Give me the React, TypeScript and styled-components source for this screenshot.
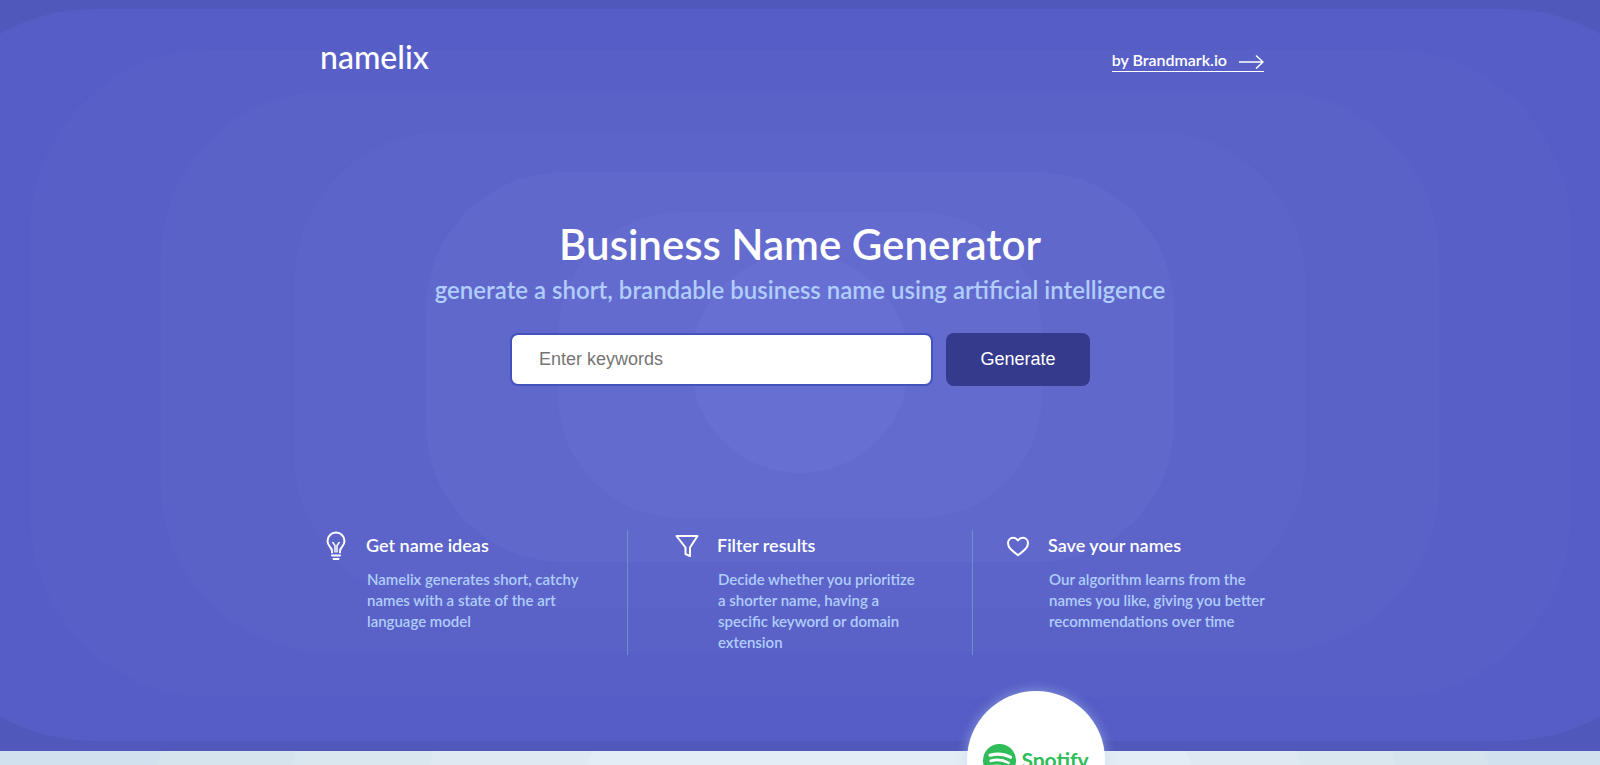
import React from "react";
import styled, { createGlobalStyle } from "styled-components";

const GlobalStyle = createGlobalStyle`
  *, *::before, *::after { box-sizing: border-box; }
  body { margin: 0; }
  h1, h2, p { margin: 0; font-weight: 600; }
`;

const Page = styled.div`
  display: flex;
  flex-direction: column;
  height: 100vh;
  overflow: hidden;
  font-family: Lato, "Open Sans", sans-serif;
  font-weight: 600;
  color: #ffffff;
`;

const Hero = styled.section`
  position: relative;
  flex: none;
  padding: 40px 24px 96px;
  background: #5059bb;
`;

const Backdrop = styled.svg`
  position: absolute;
  inset: 0;
  width: 100%;
  height: 100%;
`;

const Container = styled.div`
  position: relative;
  max-width: 960px;
  margin: 0 auto;
`;

const Header = styled.header`
  display: flex;
  justify-content: space-between;
  align-items: center;
  height: 40px;
  padding-right: 16px;
`;

const Logo = styled.a`
  padding-bottom: 6px;
  color: inherit;
  font-size: 32px;
  font-weight: 500;
  line-height: 32px;
  text-decoration: none;
`;

const MakerLink = styled.a`
  display: flex;
  align-items: center;
  gap: 12px;
  height: 24px;
  border-bottom: 1px solid #ffffff;
  color: inherit;
  font-size: 16px;
  line-height: 24px;
  text-decoration: none;
`;

const Intro = styled.div`
  display: flex;
  flex-direction: column;
  align-items: center;
  padding-top: 140px;
  text-align: center;
`;

const Title = styled.h1`
  font-size: 42px;
  line-height: 48px;
`;

const Subtitle = styled.p`
  padding-top: 6px;
  color: #b0cdfb;
  font-size: 24px;
  line-height: 32px;
  white-space: nowrap;
`;

const SearchForm = styled.form`
  display: flex;
  gap: 13px;
  width: 580px;
  padding-top: 27px;
`;

const KeywordInput = styled.input`
  flex: 1;
  min-width: 0;
  height: 53px;
  padding: 0 27px;
  border: 2px solid #4253bd;
  border-radius: 8px;
  background: #ffffff;
  color: #333333;
  font: 18px "Liberation Sans", Arial, sans-serif;
  outline: none;

  &::placeholder { color: #757575; opacity: 1; }
`;

const GenerateButton = styled.button`
  width: 144px;
  height: 53px;
  border: 0;
  border-radius: 8px;
  background: #353a8d;
  color: #ffffff;
  font: 18px "Liberation Sans", Arial, sans-serif;
  cursor: pointer;
`;

const Features = styled.div`
  display: grid;
  grid-template-columns: 308px 345px 1fr;
  padding-top: 144px;
`;

const Feature = styled.article<{ $inset: number; $divided: boolean }>`
  display: grid;
  grid-template-columns: 32px 1fr;
  grid-template-rows: 32px auto;
  column-gap: 14px;
  align-content: start;
  height: 125px;
  padding-left: ${(p) => p.$inset}px;
  border-right: ${(p) => (p.$divided ? "1px solid #6d93cb" : "0")};
`;

const FeatureIcon = styled.svg`
  width: 32px;
  height: 32px;
  fill: none;
  stroke: #ffffff;
  stroke-width: 2;
  stroke-linecap: round;
  stroke-linejoin: round;
`;

const FeatureTitle = styled.h2`
  font-size: 18px;
  line-height: 30px;
  white-space: nowrap;
`;

const FeatureText = styled.p`
  grid-column: 2;
  padding: 7px 0 0 1px;
  color: #b0cdfb;
  font-size: 15px;
  line-height: 21px;
  white-space: pre;
`;

const Clients = styled.section`
  position: relative;
  flex: 1;
  background: #d1e1ed;
`;

const Badge = styled.div`
  position: absolute;
  top: -60px;
  left: calc(50% + 167px);
  display: flex;
  align-items: center;
  justify-content: center;
  gap: 5px;
  width: 138px;
  height: 138px;
  border-radius: 50%;
  background: #ffffff;
  box-shadow: 0 0 12px rgba(190, 214, 236, 0.5);
  color: #2ebd59;
  font-size: 21px;
  font-weight: 700;
  line-height: 24px;
`;

const rings = [
  { x: -102, y: 9, right: 1702, bottom: 741, r: 197, color: "#565dc7" },
  { x: 30, y: 50, right: 1571, bottom: 697, r: 182, color: "#5860c8" },
  { x: 161, y: 91, right: 1439, bottom: 652, r: 167, color: "#5a62c8" },
  { x: 294, y: 131, right: 1306, bottom: 607, r: 152, color: "#5c64c9" },
  { x: 426, y: 172, right: 1174, bottom: 562, r: 137, color: "#6068cb" },
  { x: 558, y: 212, right: 1042, bottom: 518, r: 122, color: "#636bce" },
  { x: 691, y: 254, right: 909, bottom: 473, r: 109, color: "#6770d2" },
];

const bands = [
  { left: 160, right: 1485, color: "#d6e4ed" },
  { left: 295, right: 1393, color: "#dae7ee" },
  { left: 432, right: 1298, color: "#dee9f1" },
  { left: 590, right: 1188, color: "#e3edf5" },
];

const features = [
  {
    title: "Get name ideas",
    text: "Namelix generates short, catchy\nnames with a state of the art\nlanguage model",
    inset: 0,
    icon: (
      <>
        <path d="M12 22.500v-1.500c0-3.500-4.500-5-4.500-10a8.500 8.500 0 0 1 17 0c0 5-4.500 6.500-4.500 10v1.500" />
        <path d="M15 22v-6.500l-2.200-3M17 22v-6.500l2.200-3" strokeWidth="1.500" />
        <path d="M12 25.500h8M13.500 29h5" />
      </>
    ),
  },
  {
    title: "Filter results",
    text: "Decide whether you prioritize\na shorter name, having a\nspecific keyword or domain\nextension",
    inset: 43,
    icon: <path d="M5.500 6h21l-7.500 11.500v8.500l-4.500-2v-6.500z" />,
  },
  {
    title: "Save your names",
    text: "Our algorithm learns from the\nnames you like, giving you better\nrecommendations over time",
    inset: 29,
    icon: (
      <path d="M16 10.500C14.700 8.700 12.900 7.800 11.200 7.800C8.200 7.800 6 10.200 6 13.300C6 15.800 7.200 17.700 8.800 19.200C11 21.300 13.500 23.300 16 25.200C18.500 23.300 21 21.300 23.200 19.200C24.800 17.700 26 15.800 26 13.300C26 10.200 23.800 7.800 20.800 7.800C19.100 7.800 17.300 8.700 16 10.500Z" />
    ),
  },
];

function RingBackdrop() {
  return (
    <Backdrop viewBox="0 0 1600 751" preserveAspectRatio="xMidYMid slice" aria-hidden="true">
      {rings.map((ring) => (
        <rect
          key={ring.x}
          x={ring.x}
          y={ring.y}
          width={ring.right - ring.x}
          height={ring.bottom - ring.y}
          rx={ring.r}
          fill={ring.color}
        />
      ))}
    </Backdrop>
  );
}

function BandBackdrop() {
  return (
    <Backdrop viewBox="0 0 1600 14" preserveAspectRatio="none" aria-hidden="true">
      {bands.map((band) => (
        <polygon
          key={band.left}
          fill={band.color}
          points={`${band.left + 2},0 ${band.right - 2},0 ${band.right + 3},14 ${band.left - 3},14`}
        />
      ))}
    </Backdrop>
  );
}

function SpotifyMark() {
  return (
    <svg width="33" height="33" viewBox="0 0 33 33" aria-hidden="true">
      <circle cx="16.500" cy="16.500" r="16.500" fill="#2ebd59" />
      <g fill="none" stroke="#ffffff" strokeLinecap="round">
        <path d="M7 11.200c7-1.900 14.500-1.300 20.500 2" strokeWidth="3.200" />
        <path d="M7.800 16.900c6-1.700 12.500-1 17.700 2" strokeWidth="2.700" />
        <path d="M8.500 22.300c5-1.300 10.500-.8 15 1.900" strokeWidth="2.200" />
      </g>
    </svg>
  );
}

export default function App() {
  return (
    <Page>
      <GlobalStyle />
      <Hero>
        <RingBackdrop />
        <Container>
          <Header>
            <Logo href="#">namelix</Logo>
            <MakerLink href="#brandmark">
              by Brandmark.io
              <svg width="25" height="18" viewBox="0 0 25 18" fill="none" stroke="#ffffff" strokeWidth="1.500" aria-hidden="true">
                <path d="M0 11h24M17 4.500L24 11l-7 6.500" />
              </svg>
            </MakerLink>
          </Header>
          <Intro>
            <Title>Business Name Generator</Title>
            <Subtitle>generate a short, brandable business name using artificial intelligence</Subtitle>
            <SearchForm onSubmit={(event) => event.preventDefault()}>
              <KeywordInput type="text" placeholder="Enter keywords" aria-label="Enter keywords" />
              <GenerateButton type="submit">Generate</GenerateButton>
            </SearchForm>
          </Intro>
          <Features>
            {features.map((feature, index) => (
              <Feature key={feature.title} $inset={feature.inset} $divided={index < features.length - 1}>
                <FeatureIcon viewBox="0 0 32 32" aria-hidden="true">{feature.icon}</FeatureIcon>
                <FeatureTitle>{feature.title}</FeatureTitle>
                <FeatureText>{feature.text}</FeatureText>
              </Feature>
            ))}
          </Features>
        </Container>
      </Hero>
      <Clients>
        <BandBackdrop />
        <Badge>
          <SpotifyMark />
          Spotify
        </Badge>
      </Clients>
    </Page>
  );
}
